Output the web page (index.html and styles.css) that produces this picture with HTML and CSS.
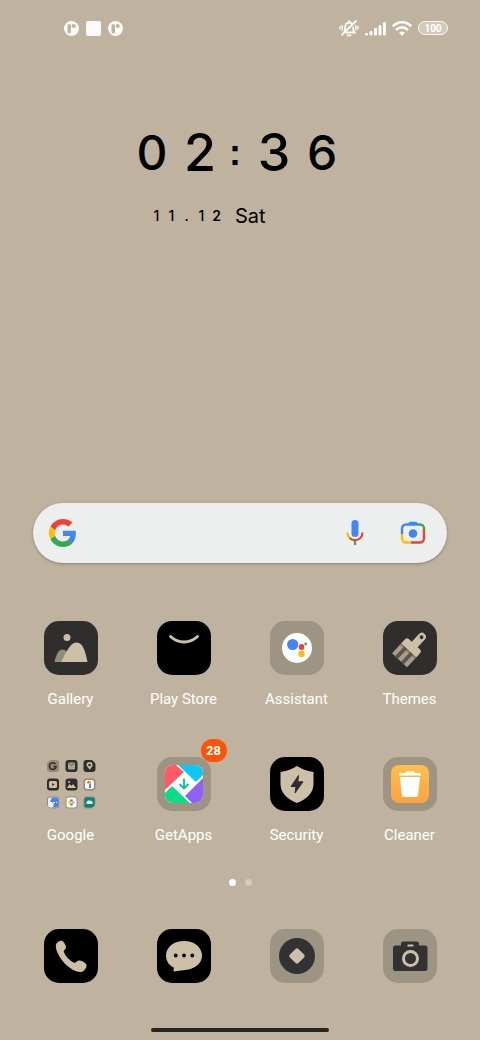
FILE: index.html
```html
<!DOCTYPE html>
<html lang="en">
<head>
    <meta charset="UTF-8">
    <meta name="viewport" content="width=device-width, initial-scale=1.0">
    <title>Home</title>
    <link rel="stylesheet" href="styles.css">
</head>
<body>
    <!-- Status bar -->
    <header class="status-bar">
        <div class="status-group">
            <svg width="15" height="15" viewBox="0 0 15 15">
                <circle cx="7.500" cy="7.500" r="7.500" fill="#fafaf8"/>
                <rect x="3.500" y="3" width="3.500" height="9.500" rx="1.700" fill="#bfb39f"/>
                <circle cx="9.700" cy="5" r="2.100" fill="#bfb39f"/>
            </svg>
            <svg width="15" height="15" viewBox="0 0 15 15">
                <rect width="15" height="15" rx="2" fill="#fafaf8"/>
            </svg>
            <svg width="15" height="15" viewBox="0 0 15 15">
                <circle cx="7.500" cy="7.500" r="7.500" fill="#fafaf8"/>
                <rect x="3.500" y="3" width="3.500" height="9.500" rx="1.700" fill="#bfb39f"/>
                <circle cx="9.700" cy="5" r="2.100" fill="#bfb39f"/>
            </svg>
        </div>
        <div class="status-group status-right">
            <svg width="20" height="18" viewBox="0 0 20 18" fill="none" stroke="#fafaf8" stroke-width="1.800" stroke-linecap="round">
                <path d="M5 13.500c1-1 1.200-2 1.200-4.800 0-3 1.200-5.200 3.800-5.200 1.400 0 2.500.7 3.100 1.800M14 8.500c0 3 .3 4 1.400 5H7.500M10 3.300V2M8.500 16.300h3M3 15.800 17 2"/>
                <path d="M3.200 6.500v4.500M1 7.500v2.500M16.800 6.500v4.500M19 7.500v2.500" stroke-width="1.400"/>
            </svg>
            <svg width="21" height="15" viewBox="0 0 21 15" fill="#fafaf8">
                <rect x="0" y="12" width="3" height="2.500" rx="1"/>
                <rect x="4.500" y="10" width="3" height="4.500" rx="1"/>
                <rect x="9" y="7" width="3" height="7.500" rx="1"/>
                <rect x="13.500" y="4" width="3" height="10.500" rx="1"/>
                <rect x="18" y="1" width="3" height="13.500" rx="1"/>
            </svg>
            <svg width="20" height="15" viewBox="0 0 20 15" fill="none" stroke="#fafaf8" stroke-width="2.600">
                <path d="M.8 5.300C6-.1 14-.1 19.200 5.300M4 9c3.400-3.500 8.600-3.500 12 0"/>
                <path d="M7 11.700c1.800-1.700 4.200-1.700 6 0L10 15z" fill="#fafaf8" stroke="none"/>
            </svg>
            <span class="battery">100</span>
        </div>
    </header>

    <main class="home">
        <!-- Clock -->
        <section class="clock">
            <time class="time">
                <span class="small-digit">0</span><span>2</span><span class="colon">:</span><span>3</span><span class="small-digit">6</span>
            </time>
            <div class="date">
                <span>1</span><span>1</span><span>.</span><span>1</span><span class="heavy">2</span>
                <span class="day">Sat</span>
            </div>
        </section>

        <!-- Search -->
        <form class="search" role="search">
            <svg width="28" height="28" viewBox="0 0 48 48">
                <path fill="#4285f4" d="M46.100 24.500c0-1.600-.1-3.100-.4-4.500H24v9h12.400c-.5 2.900-2.200 5.300-4.600 6.900l7.700 6c4.300-4 6.600-9.900 6.600-17.400z"/>
                <path fill="#ea4335" d="M24 9.500c3.500 0 6.700 1.200 9.200 3.600l6.900-6.900C35.900 2.400 30.500 0 24 0 14.600 0 6.500 5.400 2.600 13.200l8 6.200C12.400 13.700 17.700 9.500 24 9.500z"/>
                <path fill="#fbbc05" d="M10.500 28.600a14.500 14.500 0 0 1 0-9.200l-8-6.200a24 24 0 0 0 0 21.600z"/>
                <path fill="#34a853" d="M24 48c6.500 0 11.900-2.100 15.900-5.800l-7.700-6c-2.200 1.500-4.900 2.300-8.200 2.300-6.300 0-11.600-4.200-13.500-9.900l-8 6.200C6.500 42.600 14.600 48 24 48z"/>
            </svg>
            <input type="search" class="search-input" aria-label="Search">
            <button type="button" class="search-button" aria-label="Voice search">
                <svg width="18" height="26" viewBox="0 0 18 26" fill="none" stroke-width="2.200">
                    <rect x="5.500" y="0" width="7" height="17" rx="3.500" fill="#4285f4"/>
                    <path d="M1.500 12.500c0 2.600 1.100 4.700 2.800 6" stroke="#fbbc05"/>
                    <path d="M3.600 18c3 2.900 7.800 2.900 10.800 0 1.400-1.400 2.100-3.200 2.100-5.500" stroke="#ea4335"/>
                    <path d="M9 20.700V25" stroke="#34a853"/>
                </svg>
            </button>
            <button type="button" class="search-button" aria-label="Search with camera">
                <svg width="26" height="24" viewBox="0 0 26 24" fill="none" stroke-width="2.400">
                    <path d="M7.500 4 9.500.8h7l2 3.200z" fill="#4285f4"/>
                    <path d="M2 13V7.500a4 4 0 0 1 4-4h12" stroke="#4285f4"/>
                    <path d="M18 3.500h2a4 4 0 0 1 4 4V9" stroke="#34a853"/>
                    <path d="M24 8.500v9a4 4 0 0 1-4 4h-9" stroke="#ea4335"/>
                    <path d="M11 21.500H6a4 4 0 0 1-4-4V13" stroke="#fbbc05"/>
                    <circle cx="13" cy="12.500" r="4.300" fill="#4285f4"/>
                </svg>
            </button>
        </form>

        <!-- Apps -->
        <nav class="apps" aria-label="Apps">
            <a class="app" href="#gallery">
                <svg class="tile dark" viewBox="0 0 54 54">
                    <circle cx="23" cy="16.500" r="3.500" fill="#cdc0a9"/>
                    <path d="M10.500 41c1.300-6 3.600-12.500 8-12.500 3 0 5 2.500 6 5L20 41z" fill="#958b7c"/>
                    <path d="M17 41c4.500-7.500 8.500-19.500 15.500-19.500S41.700 32 43.500 41z" fill="#cdc0a9"/>
                </svg>
                <span>Gallery</span>
            </a>
            <a class="app" href="#play-store">
                <svg class="tile black" viewBox="0 0 54 54">
                    <path d="M13.500 15.500c8 7.300 19 7.300 27 0" fill="none" stroke="#cdc0a9" stroke-width="3" stroke-linecap="round"/>
                </svg>
                <span>Play Store</span>
            </a>
            <a class="app" href="#assistant">
                <svg class="tile" viewBox="0 0 54 54">
                    <circle cx="27" cy="27" r="15" fill="#fff"/>
                    <circle cx="22.700" cy="23.500" r="5.600" fill="#4285f4"/>
                    <circle cx="31.500" cy="26" r="2.900" fill="#ea4335"/>
                    <circle cx="31.500" cy="33" r="3.200" fill="#fbbc05"/>
                    <circle cx="35.700" cy="23" r="1.400" fill="#34a853"/>
                </svg>
                <span>Assistant</span>
            </a>
            <a class="app" href="#themes">
                <svg class="tile dark" viewBox="0 0 54 54">
                    <g transform="translate(28 26.500) rotate(43) scale(.95)">
                        <path d="M-3.500-5V-16a4.200 4.200 0 0 1 8.400 0v11h3.200a3 3 0 0 1 3 3v6H-10.500v-6a3 3 0 0 1 3-3z" fill="#cdc0a9"/>
                        <circle cx=".7" cy="-15.500" r="2" fill="#302e2c"/>
                        <path d="M-10.500 4h21.600v14h-21.600z" fill="#a89d8b"/>
                        <path d="M-6 4h4v14h-4zM2.500 4h4v14h-4z" fill="#5b554c"/>
                        <path d="M-10.500 4h21.600v2h-21.600z" fill="#5b554c" fill-opacity=".5"/>
                    </g>
                </svg>
                <span>Themes</span>
            </a>
            <a class="app" href="#google">
                <svg class="tile clear" viewBox="0 0 54 54">
                    <rect x="3" y="3" width="12" height="12" rx="3" fill="#958b7c"/>
                    <path d="M11.500 7a3.400 3.400 0 1 0 .7 2.500H9.500" fill="none" stroke="#302e2c" stroke-width="1.600"/>
                    <rect x="21.500" y="3" width="12" height="12" rx="3" fill="#302e2c"/>
                    <rect x="24" y="5.500" width="7" height="7" rx="1" fill="#aea38f"/>
                    <path d="m24.500 6 3 2.500 3-2.500" fill="none" stroke="#5b554c"/>
                    <rect x="39.500" y="3" width="12" height="12" rx="3" fill="#302e2c"/>
                    <path d="M45.500 13c0-2-3-3-3-5a3 3 0 0 1 6 0c0 2-2 3-3 5z" fill="#cdc0a9"/>
                    <circle cx="45.500" cy="8" r="1.300" fill="#302e2c"/>
                    <rect x="3" y="21.500" width="12" height="12" rx="3" fill="#302e2c"/>
                    <rect x="5" y="24" width="8" height="7" rx="1.500" fill="#cdc0a9"/>
                    <path d="m8.200 26 2.500 1.500-2.500 1.500z" fill="#302e2c"/>
                    <rect x="21.500" y="21.500" width="12" height="12" rx="3" fill="#302e2c"/>
                    <path d="m23 31 2.500-4 2 2 1.500-2 3 4z" fill="#cdc0a9"/>
                    <circle cx="25" cy="25" r="1" fill="#cdc0a9"/>
                    <rect x="39.500" y="21.500" width="12" height="12" rx="3" fill="#958b7c"/>
                    <rect x="41" y="23" width="9" height="9" rx="2" fill="#fff"/>
                    <path d="m43.500 26 1.500-1.500" stroke="#ea4335" stroke-width="1.800"/>
                    <path d="M46 24v3" stroke="#fbbc05" stroke-width="2"/>
                    <path d="M46 27v4" stroke="#4285f4" stroke-width="2"/>
                    <rect x="3" y="39.500" width="12" height="12" rx="3" fill="#958b7c"/>
                    <rect x="4" y="40.500" width="10" height="10" rx="2" fill="#e8eef9"/>
                    <path d="M8 40.500h4a2 2 0 0 1 2 2v6a2 2 0 0 1-2 2H9l1-4-4-2z" fill="#4285f4"/>
                    <path d="M6 45.500h7" stroke="#fff" stroke-dasharray="2 1"/>
                    <rect x="21.500" y="39.500" width="12" height="12" rx="3" fill="#958b7c"/>
                    <rect x="22.500" y="40.500" width="10" height="10" rx="2" fill="#fff"/>
                    <circle cx="27.500" cy="43.500" r="1.300" fill="#ea4335"/>
                    <circle cx="29.500" cy="45.500" r="1.300" fill="#8ab4f8"/>
                    <circle cx="27.500" cy="47.500" r="1.300" fill="#34a853"/>
                    <circle cx="25.500" cy="45.500" r="1.300" fill="#fbbc05"/>
                    <rect x="39.500" y="39.500" width="12" height="12" rx="3" fill="#958b7c"/>
                    <rect x="40.500" y="40.500" width="10" height="10" rx="2" fill="#00897b"/>
                    <path d="M42.500 47v-1.500a3 2 0 0 1 6 0V47z" fill="#fff"/>
                </svg>
                <span>Google</span>
            </a>
            <a class="app" href="#getapps">
                <span class="tile-wrap">
                    <svg class="tile" viewBox="0 0 54 54">
                        <rect x="8" y="8" width="38" height="38" rx="8" fill="#fff"/>
                        <path d="M16 8h3l8 7L8 33V16a8 8 0 0 1 8-8z" fill="#ff5a66"/>
                        <path d="M21 8h17a8 8 0 0 1 8 8v2l-7 7z" fill="#0cc8f8"/>
                        <path d="M46 21v17a8 8 0 0 1-8 8h-3l-7-7z" fill="#9160f8"/>
                        <path d="M8 36l7-7 18 17H16a8 8 0 0 1-8-8z" fill="#0bdd86"/>
                        <path d="M27 21.500V31m-4.500-4 4.500 4.500 4.500-4.500" fill="none" stroke="#08bfa4" stroke-width="1.800"/>
                    </svg>
                    <span class="badge">28</span>
                </span>
                <span>GetApps</span>
            </a>
            <a class="app" href="#security">
                <svg class="tile black" viewBox="0 0 54 54">
                    <path d="M27 9c4.500 3 9.500 5 16.500 6v12c0 9-7 15.500-16.500 19-9.500-3.500-16.500-10-16.500-19V15C17.500 14 22.500 12 27 9z" fill="#cdc0a9"/>
                    <path d="M28.500 18.500 21 29.500h5L25 36l8-11.200h-5.200z" fill="#302e2c" stroke="#302e2c" stroke-linejoin="round"/>
                </svg>
                <span>Security</span>
            </a>
            <a class="app" href="#cleaner">
                <svg class="tile" viewBox="0 0 54 54">
                    <defs>
                        <linearGradient id="cleaner" x1="0" y1="0" x2="0" y2="1">
                            <stop offset="0" stop-color="#fcc04e"/>
                            <stop offset="1" stop-color="#fba440"/>
                        </linearGradient>
                    </defs>
                    <rect x="8" y="8" width="38" height="38" rx="8" fill="url(#cleaner)"/>
                    <path d="M16 18.500v-1.500q0-1 1-1h5l1-1.500h8l1 1.500h5q1 0 1 1v1.500z" fill="#fff"/>
                    <path d="M17 20h20l-2 18.500q-.2 1.500-2 1.500H21q-1.800 0-2-1.500z" fill="#fff"/>
                </svg>
                <span>Cleaner</span>
            </a>
        </nav>

        <div class="pages">
            <span class="dot active"></span>
            <span class="dot"></span>
        </div>

        <!-- Dock -->
        <nav class="dock" aria-label="Dock">
            <a class="app" href="#phone" aria-label="Phone">
                <svg class="tile black" viewBox="0 0 54 54">
                    <path d="M12.500 14.500c2-2.500 5-4 7-1.500 1.500 2 3 4 2.300 6.200-.5 1.600-2.600 2-1.800 4 1.800 4.300 5.500 8.200 9.500 10.300 2 1 2.800-1.200 4.600-1.800 2.200-.7 5 .8 7.200 2.500 2.600 2 .8 5.300-1.300 7.300-2 1.900-5 2-8.500.5-8.500-3.600-15.700-12-18.700-20-1-2.900-1.500-5.600-.3-7.500z" fill="#cdc0a9"/>
                </svg>
            </a>
            <a class="app" href="#messages" aria-label="Messages">
                <svg class="tile black" viewBox="0 0 54 54">
                    <path d="M27 12c10 0 18 6 18 14.500S37.500 40 28 41l-11.500 1.500.3-4C11.500 36 9 31.500 9 26.500 9 18 17 12 27 12z" fill="#cdc0a9"/>
                    <circle cx="18.700" cy="26.500" r="1.900"/>
                    <circle cx="27" cy="26.500" r="1.900"/>
                    <circle cx="35.300" cy="26.500" r="1.900"/>
                </svg>
            </a>
            <a class="app" href="#browser" aria-label="Browser">
                <svg class="tile" viewBox="0 0 54 54">
                    <circle cx="27" cy="27" r="18" fill="#333232"/>
                    <rect x="21" y="21" width="12" height="12" rx="2" fill="#cdc0a9" transform="rotate(45 27 27)"/>
                </svg>
            </a>
            <a class="app" href="#camera" aria-label="Camera">
                <svg class="tile" viewBox="0 0 54 54">
                    <path d="M18 16.500V15q0-2.500 2.500-2.500h13Q36 12.500 36 15v1.500h6q2.500 0 2.500 2.500v20.500q0 2.500-2.500 2.500H12.500Q10 42 10 39.500V19q0-2.500 2.500-2.500z" fill="#333232"/>
                    <rect x="24.500" y="15.500" width="6" height="2" rx=".5" fill="#cdc0a9"/>
                    <circle cx="27.500" cy="29.500" r="7" fill="none" stroke="#cdc0a9" stroke-width="3"/>
                </svg>
            </a>
        </nav>
    </main>
    <div class="home-indicator"></div>
</body>
</html>
```
FILE: styles.css
```css
* {
    box-sizing: border-box;
}

body {
    font-family: Roboto, "Noto Sans", sans-serif;
    margin: 0;
    min-height: 100vh;
    display: flex;
    flex-direction: column;
    background-color: #bfb39f;
    color: #ffffff;
}

svg {
    display: block;
}

.status-bar {
    display: flex;
    justify-content: space-between;
    align-items: center;
    height: 56px;
    padding: 0 32px 0 64px;
}

.status-group {
    display: flex;
    align-items: center;
    gap: 7px;
}

.status-right {
    gap: 6px;
}

.battery {
    width: 30px;
    height: 14px;
    border: 1px solid #fafaf8;
    border-radius: 7px;
    background-color: #d3cabb;
    font-size: 10px;
    font-weight: bold;
    line-height: 13px;
    text-align: center;
}

.home {
    flex: 1;
    display: flex;
    flex-direction: column;
}

.clock {
    align-self: center;
    padding-top: 67px;
    margin-right: 10px;
    font-family: Inter, sans-serif;
    color: #000000;
}

.time {
    display: grid;
    grid-template-columns: 48px 48px 22px 56px 40px;
    align-items: center;
    text-align: center;
    font-size: 52px;
    font-weight: 500;
    line-height: 60px;
}

.small-digit {
    font-size: 48px;
}

.colon {
    font-family: "Liberation Sans", sans-serif;
    font-size: 36px;
    font-weight: bold;
}

.date {
    display: grid;
    grid-template-columns: repeat(5, 15px) auto;
    align-items: center;
    justify-content: start;
    padding: 21px 0 0 21px;
    text-align: center;
    font-size: 14px;
    font-weight: 500;
    line-height: 24px;
}

.heavy {
    font-weight: 600;
}

.day {
    padding-left: 11px;
    font-size: 20px;
    font-weight: normal;
}

.search {
    display: flex;
    align-items: center;
    height: 60px;
    margin: 275px 33px 0;
    padding: 0 20px 0 16px;
    border-radius: 30px;
    background-color: #edefee;
    box-shadow: 0 1px 3px rgba(0, 0, 0, 0.3);
}

.search-input {
    flex: 1;
    min-width: 0;
    height: 40px;
    border: none;
    outline: none;
    background: none;
    font-size: 16px;
}

.search-button {
    display: flex;
    justify-content: center;
    width: 28px;
    margin-left: 30px;
    padding: 0;
    border: none;
    background: none;
    cursor: pointer;
}

.apps, .dock {
    display: grid;
    grid-template-columns: repeat(4, 1fr);
    padding: 0 14px;
}

.apps {
    row-gap: 48px;
    margin-top: 58px;
}

.app {
    display: flex;
    flex-direction: column;
    align-items: center;
    gap: 14px;
    color: #ffffff;
    font-size: 15px;
    line-height: 20px;
    text-decoration: none;
}

.tile {
    width: 54px;
    height: 54px;
    border-radius: 15px;
    background-color: #9e9483;
}

.tile.dark {
    background-color: #302e2c;
}

.tile.black {
    background-color: #000000;
}

.tile.clear {
    background: none;
}

.tile-wrap {
    position: relative;
}

.badge {
    position: absolute;
    top: -18px;
    right: -16px;
    width: 26px;
    border-radius: 12px;
    background-color: #fc5404;
    font-size: 13px;
    font-weight: bold;
    line-height: 23px;
    text-align: center;
}

.pages {
    display: flex;
    justify-content: center;
    gap: 9px;
    margin-top: 34px;
}

.dot {
    width: 7px;
    height: 7px;
    border-radius: 50%;
    background-color: #d5ccbe;
}

.dot.active {
    background-color: #ffffff;
}

.dock {
    margin-top: 43px;
}

.home-indicator {
    width: 37%;
    height: 4px;
    margin: 0 auto 8px;
    border-radius: 2px;
    background-color: #242620;
}
```
